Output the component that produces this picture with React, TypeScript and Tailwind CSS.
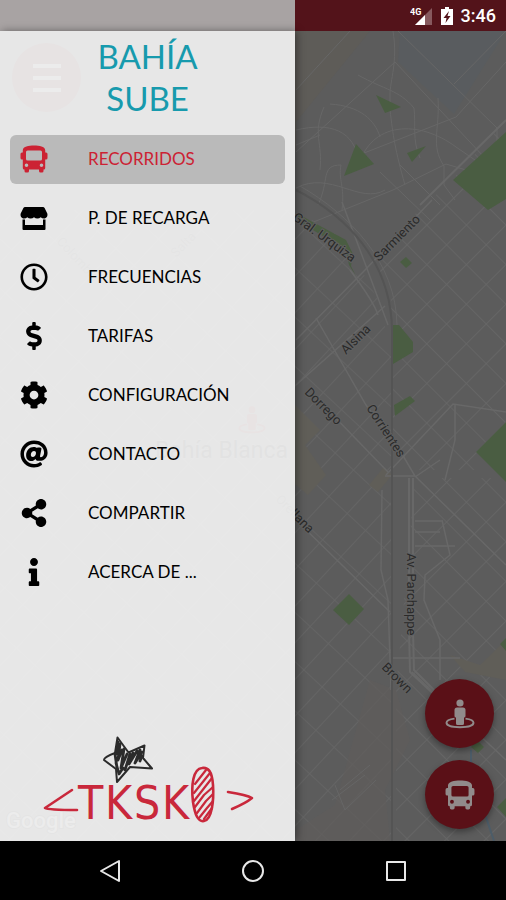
import type { ComponentType } from 'react'
import { FaAt, FaCog, FaDollarSign, FaInfo, FaRegClock, FaShareAlt } from 'react-icons/fa'

interface IconProps {
  className?: string
}

interface MenuItem {
  label: string
  icon: ComponentType<IconProps>
  active?: boolean
}

function BusIcon({ className }: IconProps) {
  return (
    <svg viewBox="0 0 28 28" className={className} fill="currentColor" aria-hidden="true">
      <path
        fillRule="evenodd"
        d="M14 0.500C19.500 0.500 24.800 1.500 25.200 5V7.500H26Q27.500 7.500 27.500 9V13Q27.500 14.500 26 14.500H25.200V23Q25.200 24.500 23.700 24.500H23.500V26Q23.500 27.500 22 27.500H20.500Q19 27.500 19 26V24.500H9V26Q9 27.500 7.500 27.500H6Q4.500 27.500 4.500 26V24.500H4.300Q2.800 24.500 2.800 23V14.500H2Q0.500 14.500 0.500 13V9Q0.500 7.500 2 7.500H2.800V5C3.200 1.500 8.500 0.500 14 0.500ZM7.500 5.500Q6 5.500 6 7V14Q6 15.500 7.500 15.500H20.500Q22 15.500 22 14V7Q22 5.500 20.500 5.500ZM6.500 18.500A1.800 1.800 0 1 0 6.500 22.100A1.800 1.800 0 1 0 6.500 18.500ZM21.500 18.500A1.800 1.800 0 1 0 21.500 22.100A1.800 1.800 0 1 0 21.500 18.500Z"
      />
    </svg>
  )
}

function StoreIcon({ className }: IconProps) {
  return (
    <svg viewBox="0 0 28 28" className={className} fill="currentColor" aria-hidden="true">
      <path d="M5 3H23Q24 3 24.600 4L27.300 9.500C28 12 26.500 14.500 24 14.500Q22 14.500 20.700 13.200Q19.300 14.500 17.400 14.500Q15.400 14.500 14 13.200Q12.600 14.500 10.600 14.500Q8.700 14.500 7.300 13.200Q6 14.500 4 14.500C1.500 14.500 0 12 0.700 9.500L3.400 4Q4 3 5 3Z" />
      <path d="M2.500 15.500H5V21H23V15.500H25.500V25Q25.500 26 24.500 26H3.500Q2.500 26 2.500 25Z" />
    </svg>
  )
}

function PersonIcon({ className }: IconProps) {
  return (
    <svg viewBox="0 0 30 30" className={className} fill="currentColor" aria-hidden="true">
      <path d="M9.500 19.600C4 20.300 1.500 22 1.500 23.800C1.500 26.600 7.500 28.300 15 28.300S28.500 26.600 28.500 23.800C28.500 22 26 20.300 20.500 19.600" fill="none" stroke="currentColor" strokeWidth="1.900" />
      <circle cx="15" cy="4" r="3.600" />
      <path d="M12 8.500H18Q20.500 8.500 20.500 11V17Q20.500 18.500 19 18.500V24.500Q19 26 17.500 26H12.500Q11 26 11 24.500V18.500Q9.500 18.500 9.500 17V11Q9.500 8.500 12 8.500Z" />
    </svg>
  )
}

const MENU: MenuItem[] = [
  { label: 'RECORRIDOS', icon: BusIcon, active: true },
  { label: 'P. DE RECARGA', icon: StoreIcon },
  { label: 'FRECUENCIAS', icon: FaRegClock },
  { label: 'TARIFAS', icon: FaDollarSign },
  { label: 'CONFIGURACIÓN', icon: FaCog },
  { label: 'CONTACTO', icon: FaAt },
  { label: 'COMPARTIR', icon: FaShareAlt },
  { label: 'ACERCA DE ...', icon: FaInfo },
]

const STREET_LABELS = [
  { text: 'Gral. Urquiza', x: 292, y: 219, angle: 36 },
  { text: 'Sarmiento', x: 379, y: 262, angle: -45 },
  { text: 'Alsina', x: 346, y: 355, angle: -45 },
  { text: 'Dorrego', x: 304, y: 393, angle: 45 },
  { text: 'Corrientes', x: 366, y: 408, angle: 57 },
  { text: 'Av. Parchappe', x: 407, y: 553, angle: 90 },
  { text: 'Orellana', x: 275, y: 500, angle: 45 },
  { text: 'Brown', x: 381, y: 668, angle: 45 },
  { text: 'Colombia', x: 56, y: 242, angle: 47 },
  { text: 'Salta', x: 176, y: 258, angle: -45 },
]

function CityMap() {
  return (
    <svg viewBox="0 31 506 810" preserveAspectRatio="xMidYMid slice" className="absolute inset-0 size-full" aria-hidden="true">
      <defs>
        <pattern id="blocks" width="28" height="28" patternUnits="userSpaceOnUse" patternTransform="rotate(45 395 300)">
          <path d="M0 0H28M0 0V28" stroke="#676767" strokeWidth="1.6" fill="none" />
        </pattern>
        <pattern id="smallBlocks" width="25" height="36" patternUnits="userSpaceOnUse" patternTransform="rotate(43 300 600)">
          <path d="M0 0H25M0 0V36" stroke="#666666" strokeWidth="1.6" fill="none" />
        </pattern>
      </defs>

      <rect y="31" width="506" height="810" fill="#5c5c5c" />
      <path d="M0 31H370L296 122V150H0Z" fill="#5e5c58" />
      <path d="M400 31H506L454 114L398 62Z" fill="#595c5f" />

      {/* city blocks on each side of the railway */}
      <path d="M506 120L452 180L400 228L375 258L391 300L393 430L410 470L506 470Z" fill="url(#blocks)" />
      <path d="M0 210L296 210L345 240L378 300L391 350V841H0Z" fill="url(#smallBlocks)" />
      <path d="M415 478L506 478V841H396V690Z" fill="url(#blocks)" />

      {/* dry land */}
      <path d="M290 400L320 430L305 445L326 475L308 495L290 480ZM384 467L392 475L378 492L369 485Z" fill="#605e58" />
      <path d="M370 680L396 690L410 740L385 790L390 841H296V830L335 805Z" fill="#5f5d5b" fillOpacity="0.7" />
      <path d="M450 655L480 665L506 640V680L465 672Z" fill="#605e58" />

      {/* streets */}
      <g fill="none" stroke="#676767" strokeWidth="1">
        <path d="M393 31C398 62 390 80 390 95V110C393 135 395 150 405 185" />
        <path d="M296 152L395 62L484 157L495 152" />
        <path d="M358 75C385 90 399 90 414 108C416 125 412 140 420 158" />
        <path d="M296 130C330 122 355 130 359 163M320 170C323 142 312 135 324 107" />
        <path d="M330 104C360 106 375 120 380 137" />
        <path d="M358 168C370 120 420 120 456 147L475 160" />
        <path d="M296 188C330 170 360 205 385 190M296 145L320 135" />
        <path d="M311 223L393 190L446 164L476 173M359 155L456 117L506 62" />
        <path d="M342 210C345 185 338 180 341 165M318 205C330 180 320 165 341 165" />
        <path d="M438 98C440 130 430 145 444 166V185L455 200" />
        <path d="M398 31L497 128V155M350 31L296 90M506 31L454 84M380 172L430 220M400 165L440 205" />
      </g>
      <path d="M506 120L420 205" fill="none" stroke="#686868" strokeWidth="2" />
      <g fill="none" stroke="#686868" strokeWidth="1.5">
        <path d="M296 340L365 270L432 200M296 385L385 306" />
        <path d="M316 318L366 405L402 454L415 476H385" />
        <path d="M386 475L453 404L506 412" />
        <path d="M326 408L388 472M296 520L390 612M412 672L506 760" />
        <path d="M415 476L506 565M445 480L455 440V405M415 477L440 460" />
        <path d="M342 202L375 290L388 325M350 270C365 290 375 305 378 315" />
        <path d="M382 490L381 570L388 600L391 690M391 658H460" />
        <path d="M442 520L450 555L425 575L424 600L440 640V680M415 521H442M415 532H440M415 546H455" />
      </g>
      <path d="M409 478V630L410 672L440 700M413 478V630L414 670L444 700" fill="none" stroke="#686868" strokeWidth="2" />
      <path d="M340 790L370 765M332 800L365 775M345 810L376 780M335 785L345 810" stroke="#666666" />

      {/* parks */}
      <g fill="#4a5d42">
        <path d="M376 95L401 107L385 113Z" />
        <path d="M356 144L374 164L344 176Z" />
        <path d="M407 153L426 146L412 162Z" />
        <path d="M506 132L453 180L488 210L506 199Z" />
        <path d="M298 214L346 240L353 254L351 266L356 276L349 265L346 250L298 221Z" />
        <path d="M406 257L412 263L406 268L400 262Z" />
        <path d="M393 325H399L413 342V352L393 364Z" />
        <path d="M394 405L410 396L415 401L395 416Z" />
        <path d="M506 422L476 452L506 482Z" />
        <path d="M349 594L364 609L349 625L333 610Z" />
        <path d="M506 638L500 644L506 651ZM477 740L484 747L478 753L471 747ZM506 798L497 807L506 817Z" />
      </g>
      <path d="M471 750V772L494 841" fill="none" stroke="#4c5c68" strokeWidth="2" />

      {/* railway */}
      <path d="M296 190C345 215 391 260 392 330V841" fill="none" stroke="#545454" strokeWidth="2" />
      <path d="M300 186C350 215 396 262 397 325" fill="none" stroke="#666666" strokeWidth="1" />

      <g fill="#2a2a2a" stroke="#606060" strokeWidth="2" paintOrder="stroke" fontFamily="Roboto, sans-serif" fontSize="13">
        {STREET_LABELS.map((s) => (
          <text key={s.text} transform={`translate(${s.x} ${s.y}) rotate(${s.angle})`}>{s.text}</text>
        ))}
        <text x="155" y="458" fontSize="23" fill="#000000">Bahía Blanca</text>
      </g>
      <text x="6" y="828" fill="#a0a0a0" stroke="#202020" strokeWidth="2" paintOrder="stroke" fontFamily="Roboto, sans-serif" fontSize="22" fontWeight="500">Google</text>
    </svg>
  )
}

function TkskoLogo() {
  return (
    <svg viewBox="40 735 214 98" className="w-[214px]" role="img" aria-label="TKSKO">
      <g fill="none" stroke="#c9283b" strokeWidth="2.6" strokeLinecap="round" strokeLinejoin="round">
        <path d="M71 790L44 808Q47 810 76 810" />
        <path d="M227 792Q246 795 251 798Q245 803 231 809" />
        <path d="M201 768C192 769 190 785 192 802C194 815 197 822 203 821C211 820 213 800 212 785C211 771 207 767 201 768Z" />
        <path strokeWidth="2.2" d="M194 784L205 770M193 793L209 773M193 801L211 778M194 807L203 795L212 787M196 813L205 801L212 794M198 818L206 808L212 801M203 819L211 808" />
      </g>
      <g fill="#c9283b" fontFamily="'DejaVu Sans Condensed', 'Open Sans', sans-serif" fontSize="46">
        <text x="77" y="819">T</text>
        <text x="104" y="819">K</text>
        <text x="133" y="819">S</text>
        <text x="161" y="819">K</text>
      </g>
      <path d="M116.500 737.500L127.500 752.500L143.500 745.500L142 758L151 768.500L129 767L116 782L115 769L103 760Q103 757 114 753Z" fill="#e7e7e7" stroke="#2b2b2b" strokeWidth="2" strokeLinejoin="round" />
      <path d="M117 742L115 754M119 744L117 760L121 750M123 749L120 768L126 754M115 763L118 774L122 768M129 754L124 770M132 753L128 764L136 751M139 750L134 763L141 752M139 761L141 756M114 754L116 768" fill="none" stroke="#2b2b2b" strokeWidth="2.8" strokeLinecap="round" strokeLinejoin="round" />
    </svg>
  )
}

export default function App() {
  return (
    <div className="flex min-h-screen flex-col bg-black font-[Lato,sans-serif]">
      <header className="flex h-[31px]">
        <div className="w-7/12 bg-[#a8a3a3]" />
        <div className="flex flex-1 items-center justify-end gap-2 bg-[#53131a] pr-2.5 text-white">
          <svg viewBox="0 0 23 20" className="h-5 w-[23px]" aria-hidden="true">
            <path d="M22 2V19H5Z" fill="#87595e" />
            <path d="M15 9V19H5Z" fill="#ffffff" />
            <text x="0" y="9" fill="#ffffff" fontFamily="Roboto, sans-serif" fontSize="9" fontWeight="700">4G</text>
          </svg>
          <svg viewBox="0 0 12 18" className="h-[18px] w-3" aria-hidden="true">
            <path d="M4 0H8V2H12V18H0V2H4Z" fill="#ffffff" />
            <path d="M8 4L2.500 11H5.500L4.500 16L9.500 9H6.500Z" fill="#53131a" />
          </svg>
          <span className="font-[Roboto,sans-serif] text-lg font-medium">3:46</span>
        </div>
      </header>

      <main className="relative flex flex-1">
        <CityMap />
        <button aria-label="Menú" className="absolute top-3 left-3 flex size-[69px] flex-col items-center justify-center gap-2 rounded-full bg-[#5a1017]">
          <span className="h-1 w-7 bg-[#a0a0a0]" />
          <span className="h-1 w-7 bg-[#a0a0a0]" />
          <span className="h-1 w-7 bg-[#a0a0a0]" />
        </button>
        <PersonIcon className="absolute top-[375px] left-[238px] size-7 text-[#6a1017]" />

        <aside className="relative flex w-7/12 flex-col bg-[#f0f0f0]/94 shadow-[2px_0_8px_rgba(0,0,0,0.4)]">
          <h1 className="mt-1 px-20 text-center text-[33px] leading-[42px] text-[#179aad]">BAHÍA SUBE</h1>
          <nav className="mt-4 flex flex-col gap-2.5 px-2.5">
            {MENU.map(({ label, icon: Icon, active }) => (
              <a
                key={label}
                href="#"
                className={`flex h-[49px] items-center gap-10 rounded-md px-2.5 pb-px text-[17px] ${active ? 'bg-[#bababa] text-[#cc2233]' : 'text-black'}`}
              >
                <Icon className="size-7" />
                {label}
              </a>
            ))}
          </nav>
          <div className="mt-auto flex justify-center pb-2">
            <TkskoLogo />
          </div>
        </aside>

        <div className="relative flex flex-1 flex-col items-end justify-end gap-3 pr-3 pb-3">
          <button aria-label="Mi ubicación" className="flex size-[69px] items-center justify-center rounded-full bg-[#5a1017] text-[#918b8b] shadow-[0_3px_6px_rgba(0,0,0,0.35)]">
            <PersonIcon className="size-[30px]" />
          </button>
          <button aria-label="Recorridos" className="flex size-[69px] items-center justify-center rounded-full bg-[#5a1017] text-[#918b8b] shadow-[0_3px_6px_rgba(0,0,0,0.35)]">
            <BusIcon className="size-[30px]" />
          </button>
        </div>
      </main>

      <footer className="flex h-[59px] items-center justify-center gap-[119px] text-[#e8e8e8]">
        <button aria-label="Atrás">
          <svg viewBox="0 0 24 24" className="size-6" fill="none" stroke="currentColor" strokeWidth="2" strokeLinejoin="round">
            <path d="M21 2V22L3 12Z" />
          </svg>
        </button>
        <button aria-label="Inicio">
          <svg viewBox="0 0 24 24" className="size-6" fill="none" stroke="currentColor" strokeWidth="2">
            <circle cx="12" cy="12" r="10" />
          </svg>
        </button>
        <button aria-label="Recientes">
          <svg viewBox="0 0 24 24" className="size-6" fill="none" stroke="currentColor" strokeWidth="2" strokeLinejoin="round">
            <rect x="3" y="3" width="18" height="18" />
          </svg>
        </button>
      </footer>
    </div>
  )
}
